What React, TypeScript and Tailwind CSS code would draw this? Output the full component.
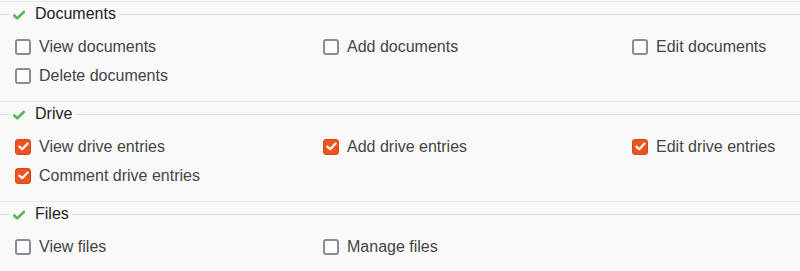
import React from 'react';

type Perm = { label: string; checked: boolean };
type Section = { title: string; perms: Perm[] };

const sections: Section[] = [
  {
    title: 'Documents',
    perms: [
      { label: 'View documents', checked: false },
      { label: 'Add documents', checked: false },
      { label: 'Edit documents', checked: false },
      { label: 'Delete documents', checked: false },
    ],
  },
  {
    title: 'Drive',
    perms: [
      { label: 'View drive entries', checked: true },
      { label: 'Add drive entries', checked: true },
      { label: 'Edit drive entries', checked: true },
      { label: 'Comment drive entries', checked: true },
    ],
  },
  {
    title: 'Files',
    perms: [
      { label: 'View files', checked: false },
      { label: 'Manage files', checked: false },
    ],
  },
];

function GreenCheck() {
  return (
    <svg width="12" height="10" viewBox="0 0 12 10" className="ml-[2px] mt-[2px]">
      <path d="M1.3 5.6 L4.3 8.2 L10.8 2" fill="none" stroke="#5cb85c" strokeWidth="2.8" strokeLinecap="round" strokeLinejoin="round" />
    </svg>
  );
}

function Box({ checked }: { checked: boolean }) {
  if (checked) {
    return (
      <span className="flex h-4 w-4 shrink-0 items-center justify-center rounded-[3px] border border-[#d9481a] bg-[#e95420]">
        <svg width="11" height="9" viewBox="0 0 11 9">
          <path d="M1.4 4.6 L4.2 7.2 L9.6 1.6" fill="none" stroke="#fff" strokeWidth="2.2" strokeLinecap="round" strokeLinejoin="round" />
        </svg>
      </span>
    );
  }
  return <span className="h-4 w-4 shrink-0 rounded-[3px] border-2 border-[#8c8a96] bg-white" />;
}

export default function App() {
  return (
    <div className="h-[271px] w-[800px] overflow-hidden bg-[#f9f9f9] pt-px font-['Liberation_Sans',Arial,sans-serif] text-[16px]">
      {sections.map((s) => (
        <div key={s.title} className="border-t border-[#e8e8e8] pb-[11px]">
          <div className="flex h-[24px] items-center">
            <div className="h-px w-[10px] bg-[#dedede]" />
            <div className="flex items-center gap-[10px] pl-[1px] pr-[3px]">
              <GreenCheck />
              <span className="leading-none text-[#222]">{s.title}</span>
            </div>
            <div className="h-px flex-1 bg-[#dedede]" />
          </div>
          <div className="mt-[6px] grid grid-cols-[308px_309px_1fr] px-[15px]">
            {s.perms.map((p) => (
              <label key={p.label} className="flex h-[29px] items-center gap-[8px] text-[#444]">
                <Box checked={p.checked} />
                <span>{p.label}</span>
              </label>
            ))}
          </div>
        </div>
      ))}
    </div>
  );
}
